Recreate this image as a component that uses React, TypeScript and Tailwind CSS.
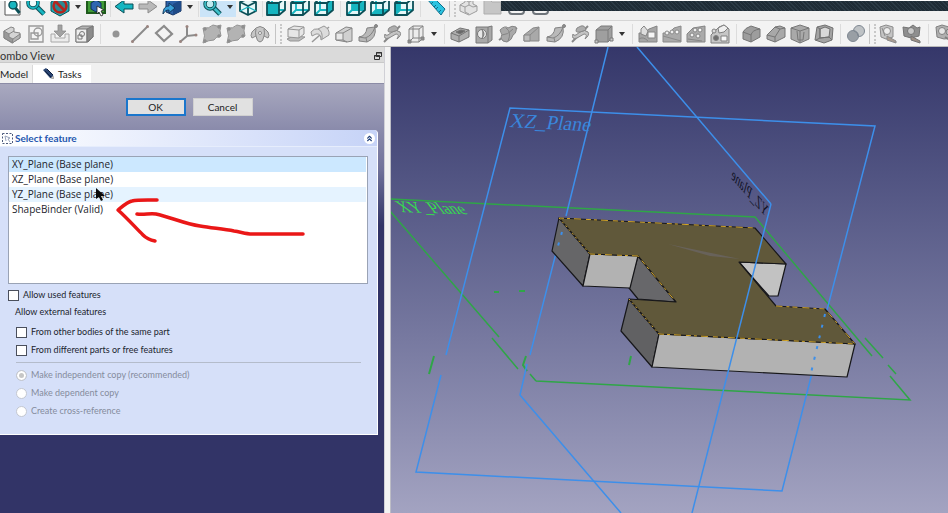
import { useState, type ReactNode } from "react";
import { ChevronsUp } from "lucide-react";
import clsx from "clsx";

const teal = "#16b5c0";
const tealDark = "#0b4f57";
const grey = "#b4b4b4";
const greyDark = "#858585";
const greyLight = "#d4d4d4";

/* Standard view cube: the face that is looked at is filled. */
function ViewCube({ face }: { face?: "front" | "top" | "right" | "rear" | "bottom" | "left" }) {
  const faces = {
    front: "M1 6h12v12H1z",
    top: "M1 6l5-5h13l-6 5z",
    right: "M13 6l6-5v12l-6 5z",
    rear: "M6 1h13v12H6z",
    bottom: "M1 18l5-5h13l-6 5z",
    left: "M1 6l5-5v12l-5 5z",
  };
  return (
    <g strokeLinejoin="round" fill="none">
      <path d="M1 6l5-5h13v12l-6 5H1z" fill="#e6f7f8" />
      <path d="M6 1v12h13M6 13l-5 5" stroke={teal} strokeWidth="1.800" />
      {face && <path d={faces[face]} fill={teal} />}
      <path d="M1 6l5-5h13v12l-6 5H1zM1 6h12v12M13 6l6-5" stroke={tealDark} strokeWidth="1.800" />
    </g>
  );
}

const icons: Record<string, ReactNode> = {
  fitAll: (
    <>
      <path d="M3 1h15v17H3z" fill="#fff" stroke="#555" />
      <circle cx="11" cy="8" r="4" fill={teal} stroke={tealDark} strokeWidth="1.500" />
      <path d="M13.500 11l4 5" stroke={tealDark} strokeWidth="3" />
    </>
  ),
  fitSelection: (
    <>
      <path d="M10 9l8 8" stroke={tealDark} strokeWidth="5" />
      <path d="M10 9l8 8" stroke={teal} strokeWidth="3" />
      <circle cx="7" cy="6" r="5" fill="#eefafa" stroke={tealDark} strokeWidth="3.600" />
      <circle cx="7" cy="6" r="5" fill="none" stroke={teal} strokeWidth="2" />
    </>
  ),
  drawStyle: (
    <>
      <path d="M1 5l9-5 9 5v9l-9 5-9-5z" fill={teal} stroke={tealDark} />
      <circle cx="10" cy="9" r="6.500" fill="#2c8a92" stroke="#b3261e" strokeWidth="2.600" />
      <path d="M6 5l8 8" stroke="#b3261e" strokeWidth="2.600" />
    </>
  ),
  boxSelect: (
    <>
      <path d="M1 3h18v13H1z" fill="#3f9b35" stroke="#1f5a1c" strokeWidth="2" />
      <path d="M5 6l5-3 5 3v6l-5 3-5-3z" fill="#2f67b0" stroke="#122f5c" />
      <path d="M11 9l7 4-3 1 2 4-2 1-2-4-2 2z" fill="#fff" stroke="#222" strokeWidth=".8" />
    </>
  ),
  back: <path d="M10 3v4h9v5h-9v4L1 9.500z" fill={teal} stroke={tealDark} />,
  forward: <path d="M10 3v4H1v5h9v4l9-6.500z" fill="#b9b9b9" stroke="#8d8d8d" />,
  linkGo: (
    <>
      <path d="M4 4l8-3 7 2v11l-8 4-7-3z" fill="#2e62a8" stroke="#16325e" />
      <path d="M11 7l8-4v11l-8 4z" fill="#1f4b88" />
      <path d="M1 17c0-6 3-8 6-8V6l6 5-6 5v-3c-3 0-4 1-6 4z" fill="#3aa0d8" stroke="#123a5f" />
    </>
  ),
  zoom: (
    <>
      <path d="M10 9l8 8" stroke={tealDark} strokeWidth="5" />
      <path d="M10 9l8 8" stroke="#3fc0ca" strokeWidth="2.600" />
      <circle cx="8" cy="7" r="5" fill="#bfeaf0" stroke={tealDark} strokeWidth="3.400" />
      <circle cx="8" cy="7" r="5" fill="none" stroke="#3fc0ca" strokeWidth="1.600" />
    </>
  ),
  iso: (
    <g fill="#e6f7f8" stroke={tealDark} strokeWidth="1.800" strokeLinejoin="round">
      <path d="M2 5l8-3 8 3v9l-8 4-8-4z" />
      <path d="M2 5l8 4 8-4M10 9v9" fill="none" />
      <path d="M2 14l8-4 8 4" fill="none" stroke={teal} strokeWidth="1.200" />
    </g>
  ),
  front: <ViewCube face="front" />,
  top: <ViewCube face="top" />,
  right: <ViewCube face="right" />,
  rear: <ViewCube face="rear" />,
  bottom: <ViewCube face="bottom" />,
  left: <ViewCube face="left" />,
  ruler: (
    <>
      <path d="M1 2l5-3 13 13-4 6z" fill="#2cc3e0" stroke="#0c6f8c" />
      <path d="M5 7l2-2M8 10l2-2M10 12l2-2M13 15l2-2" stroke="#0c6f8c" />
    </>
  ),
  part: (
    <g fill="#e2e2e2" stroke="#9d9d9d">
      <path d="M2 8l5-3V2l4-2 4 2v5l4 2v5l-8 4-9-4z" />
      <path d="M2 8l5 2 4-2V5l4-2M7 10v5l4 2M11 8l4 2 4-1M11 5L7 3" fill="none" />
    </g>
  ),
  folder: <path d="M2 3h6l2 2h9v12H2z" fill="#c6c6c6" stroke="#adadad" />,
  hidden: <path d="M3 0v14q0 3 3 3h9q3 0 3-3V0" fill="#f4f4f4" stroke="#6e747a" strokeWidth="2" />,

  body: (
    <g stroke={greyDark} strokeLinejoin="round">
      <path d="M2 7l7-4 3 1v4l6 1v5l-8 5-8-5z" fill={greyLight} />
      <path d="M2 7l5 3v3l4 2v4l-9-5z" fill="#999" />
      <path d="M11 15l7-5v4l-8 5z" fill={grey} />
      <path d="M7 10l5-3" fill="none" />
    </g>
  ),
  sketch: (
    <g fill="none" stroke="#9a9a9a" strokeWidth="1.400">
      <path d="M3 2h14v16H3z" fill="#f4f4f4" />
      <circle cx="12" cy="8" r="4" />
      <path d="M5 9h7v6H5z" />
    </g>
  ),
  editSketch: (
    <>
      <path d="M1 10h4v4h10v-4h4v8H1z" fill="#ececec" stroke="#a8a8a8" />
      <path d="M8 1h4v6h4l-6 6-6-6h4z" fill="#a2a2a2" stroke="#8a8a8a" strokeWidth=".8" />
    </>
  ),
  mapSketch: (
    <g stroke="#777" strokeLinejoin="round">
      <path d="M2 5l6-3h11v11l-5 5H2z" fill={grey} />
      <path d="M2 5h11v13H2z" fill="#eee" />
      <path d="M13 5l6-3v11l-6 5z" fill="#8b8b8b" />
      <circle cx="8" cy="10" r="2.500" fill="none" />
      <path d="M4 11h4v4H4z" fill="none" />
    </g>
  ),
  point: <circle cx="10" cy="10" r="3.500" fill="#959595" />,
  line: (
    <>
      <path d="M2 18L18 2" stroke="#8b8b8b" strokeWidth="2" />
      <circle cx="2.500" cy="17.500" r="1.500" fill="#9b8580" />
      <circle cx="17.500" cy="2.500" r="1.500" fill="#9b8580" />
    </>
  ),
  plane: <path d="M10 2l8 8-8 7-8-8z" fill="#f3f3f3" stroke="#8b8b8b" strokeWidth="2.200" />,
  axes: (
    <>
      <path d="M9 2v10l9-1M9 12l-7 6" fill="none" stroke="#8b8b8b" strokeWidth="2" />
      <circle cx="9" cy="2.500" r="1.500" fill="#9b8580" />
      <circle cx="18" cy="11" r="1.500" fill="#9b8580" />
      <circle cx="2.500" cy="17.500" r="1.500" fill="#9b8580" />
    </>
  ),
  shapeBinder: (
    <g stroke="#929292">
      <path d="M1 4q6 1 10-3 4 2 8 0-2 6 0 11-6 1-7 4-5 0-11 3 3-7 0-15z" fill="#b3b3b3" />
      <circle cx="3" cy="5" r="1.300" fill="#8b8b8b" />
      <circle cx="17" cy="3" r="1.300" fill="#8b8b8b" />
      <circle cx="3" cy="17" r="1.300" fill="#8b8b8b" />
      <circle cx="17" cy="12" r="1.300" fill="#8b8b8b" />
    </g>
  ),
  clone: (
    <g stroke="#888">
      <path d="M6 4q4-3 8 0l4 4q2 4 0 6l-4-2q-1 6-4 6t-4-6l-4 2q-2-2 0-6z" fill="#c6c6c6" />
      <path d="M6 5q-1 4 0 7M14 5q1 4 0 7" fill="none" />
      <circle cx="10" cy="9" r="1.500" fill="#fff" />
    </g>
  ),
  pad: (
    <g stroke="#949494" strokeLinejoin="round">
      <path d="M1 15l7-3 11 1-6 4H4z" fill="#bcbcbc" />
      <path d="M2 5l6-3 10 1v7l-5 4-11-1z" fill="#e6e6e6" />
      <path d="M2 5l11 1 5-3M13 6v8" fill="none" />
    </g>
  ),
  revolution: (
    <g stroke="#979797">
      <path d="M2 18L19 3" strokeWidth="1.500" />
      <path d="M1 8q3-4 7-3l6-3q6 3 5 9l-8 5q0-7-5-6l-4 2z" fill="#dcdcdc" />
      <path d="M8 5q5 2 4 10" fill="none" />
    </g>
  ),
  loft: (
    <g stroke="#858585" strokeLinejoin="round">
      <path d="M2 9l10-6 6 1v13l-5 1-11-2z" fill="#d0d0d0" />
      <path d="M2 9h7v7H2z" fill="#e8e8e8" />
      <path d="M9 9l9-5M9 16l4 2" fill="none" />
    </g>
  ),
  pipe: (
    <g stroke="#828282">
      <path d="M1 13q7-1 8-9l8-1q2 11-8 15l-8-1z" fill="#b9b9b9" />
      <path d="M1 13l6 1q7-2 10-11M8 14l1 4" fill="none" />
      <circle cx="18" cy="2" r="1.500" fill="#909090" />
    </g>
  ),
  helix: (
    <g stroke="#888">
      <path d="M2 18L18 2" strokeWidth="2" />
      <path d="M3 10q-2 6 4 4l7-4q4 0 1 5 5-4 3-7-3-3-8 0l-4 3q-3 1-3-1z" fill="#c4c4c4" />
      <path d="M7 4q-3 5 3 4l6-2q-1-5-5-4z" fill="#adadad" />
    </g>
  ),
  box: (
    <g stroke="#828282" strokeLinejoin="round">
      <path d="M3 5l4-3h10v12l-4 4H3z" fill="#ebebeb" />
      <path d="M3 5h10v13M13 5l4-3M7 2v12h10M7 14l-4 4" fill="none" />
      <path d="M2 16h3v3H2zM15 13h3v3h-3z" fill="#8c8c8c" />
    </g>
  ),
  pocket: (
    <g stroke="#747474" strokeLinejoin="round">
      <path d="M1 9l9-5 9 2v7l-10 5-8-3z" fill="#aeaeae" />
      <path d="M1 9l8 3 10-6M9 12v6" fill="none" />
      <path d="M6 8l5-2 4 1-5 3z" fill="#686868" />
    </g>
  ),
  hole: (
    <g stroke="#787878">
      <path d="M2 3h12l4-1v14l-4 3H2z" fill="#a8a8a8" />
      <path d="M14 3v16" />
      <circle cx="8" cy="10" r="4.500" fill="#e8e8e8" />
      <path d="M8 6q4 4 0 8" fill="#999" />
    </g>
  ),
  groove: (
    <g stroke="#858585">
      <path d="M1 16L19 4" strokeWidth="2" />
      <path d="M2 6q5-5 8-2 4-3 8-1 1 6-3 8-1 5-6 7-5 0-6-4 2-3-1-8z" fill="#a9a9a9" />
      <path d="M8 4q6 4 2 13M4 11q6 0 11-6" fill="none" />
    </g>
  ),
  subLoft: (
    <g stroke="#888" strokeLinejoin="round">
      <path d="M2 11l9-7 6-1v14H2z" fill="#a9a9a9" />
      <path d="M2 11h6v6H2z" fill="#bdbdbd" />
      <path d="M8 11l9-8" fill="none" />
    </g>
  ),
  subBox: (
    <g stroke="#7b7b7b" strokeLinejoin="round">
      <path d="M2 6l5-4h11v12l-4 4H2z" fill="#9f9f9f" />
      <path d="M2 6h12v12M14 6l4-4" fill="none" />
      <path d="M1 16h3v3H1zM16 14h3v3h-3z" fill="#c9c9c9" />
    </g>
  ),
  mirrored: (
    <g stroke="#858585">
      <path d="M1 9h5l5-4 8-3v16H1z" fill="#a5a5a5" />
      <path d="M3 5l3-3 4 5-2 5-5-2z" fill="#dedede" />
      <path d="M10 8h7v6h-7z" fill="#f5f5f5" />
      <path d="M1 15q4-3 9 2" fill="none" />
    </g>
  ),
  linearPattern: (
    <g stroke="#8a8a8a">
      <path d="M1 9h6l5-5 7-2v16H1z" fill="#aaa" />
      <circle cx="5" cy="9" r="2" fill="#efefef" />
      <circle cx="10" cy="8" r="2" fill="#efefef" />
      <circle cx="15" cy="8" r="2" fill="#f8f8f8" />
      <path d="M1 12l18 5" />
    </g>
  ),
  polarPattern: (
    <g stroke="#858585">
      <path d="M1 10l6-6 12-2v16H1z" fill="#aaa" />
      <circle cx="9" cy="6" r="2" fill="#efefef" />
      <circle cx="14" cy="6" r="2" fill="#f8f8f8" />
      <circle cx="6" cy="11" r="2" fill="#efefef" />
      <circle cx="12" cy="12" r="2" fill="#efefef" />
      <path d="M2 15l14 2" />
    </g>
  ),
  multiTransform: (
    <g stroke="#808080">
      <path d="M1 11l8-8 5-2 5 4v14H1z" fill="#c6c6c6" />
      <path d="M8 4l6-3 4 3-4 4-5 1z" fill="#efefef" />
      <circle cx="4" cy="7" r="2" fill="#dcdcdc" />
      <circle cx="6" cy="14" r="2.500" fill="#6f6f6f" />
      <path d="M11 12h6v5h-6z" fill="#f8f8f8" />
    </g>
  ),
  fillet: (
    <g stroke="#757575" strokeLinejoin="round">
      <path d="M1 8q2-4 8-6l9 3v8l-9 5-8-3z" fill="#9d9d9d" />
      <path d="M1 8l8 3q1-5 9-6M9 11v7" fill="none" />
    </g>
  ),
  chamfer: (
    <g stroke="#757575" strokeLinejoin="round">
      <path d="M1 11l8-8 5-1 5 2v9l-10 5-8-3z" fill="#a8a8a8" />
      <path d="M1 11l8 2 5-8 5-1M9 13v5M9 3l5 2" fill="none" />
    </g>
  ),
  draft: (
    <g stroke="#777" strokeLinejoin="round">
      <path d="M1 4l9-3 9 3v11l-9 4-9-4z" fill="#a9a9a9" />
      <path d="M1 4l9 3 9-3M10 7v12M7 7l1 9h5l1-8" fill="none" />
    </g>
  ),
  thickness: (
    <g stroke="#707070" strokeLinejoin="round">
      <path d="M1 16L3 3l8-2 8 3-1 12-8 3z" fill="#a3a3a3" />
      <path d="M6 5l5-2 5 2-1 8-9 1z" fill="#d9d9d9" />
      <path d="M3 3l3 2v9l-4 2M6 14l9-1 3 3" fill="none" />
    </g>
  ),
  boolean: (
    <g stroke="#7e8791">
      <circle cx="13" cy="7" r="5.500" fill="#bec2c5" />
      <circle cx="7" cy="12" r="5.500" fill="#999fa5" />
      <path d="M8 7q4 1 4 5" fill="none" />
    </g>
  ),
  measure: (
    <g stroke="#8c8c8c">
      <path d="M2 3l6-2 7 2v10l-7 2-5-2z" fill="#c4c4c4" />
      <circle cx="9" cy="7" r="3.500" fill="#ededed" />
      <path d="M9 12l9 5v2l-9-3z" fill="#a99c91" />
      <path d="M4 4l3 8" fill="none" />
    </g>
  ),
  measureAngular: (
    <g stroke="#747474">
      <path d="M1 3l6 1 4-3 4 3 3-1-1 9-8 2-7-2z" fill="#8f8f8f" />
      <circle cx="9" cy="7" r="3.500" fill="#c8c8c8" />
      <path d="M9 12l9 5v2l-9-3z" fill="#9c8f85" />
    </g>
  ),
  measureRefresh: (
    <g stroke="#808080">
      <path d="M2 3l6-2 7 2 4-1v12l-9 1-7-2z" fill="#b0b0b0" />
      <circle cx="8" cy="7" r="3.500" fill="#e5e5e5" />
      <circle cx="15" cy="8" r="3" fill="#bdbdbd" />
      <path d="M11 13l8 5" strokeWidth="2" />
    </g>
  ),
};

function Icon({ name }: { name: string }) {
  return (
    <button type="button" aria-label={name} className="flex h-5 w-6 shrink-0 items-center justify-center">
      <svg viewBox="0 0 20 20" className="size-5" fill="none" aria-hidden="true">
        {icons[name]}
      </svg>
    </button>
  );
}

function Drop() {
  return (
    <button type="button" aria-label="more" className="flex h-5 w-3 shrink-0 items-center justify-center">
      <svg viewBox="0 0 6 4" className="h-1 w-1.5" aria-hidden="true">
        <path d="M0 0h6L3 4z" fill="#333" />
      </svg>
    </button>
  );
}

function Sep({ narrow }: { narrow?: boolean }) {
  return (
    <span className={clsx("flex h-5 shrink-0 justify-center", narrow ? "w-1" : "w-2")}>
      <span className="w-px bg-[#dcdcdc]" />
    </span>
  );
}

function Grip({ wide }: { wide?: boolean }) {
  return (
    <span className={clsx("flex h-5 shrink-0 justify-center gap-1", wide ? "w-3" : "w-2")}>
      <span className="w-px bg-[#c4c4c4]" />
      <span className="border-l-2 border-dotted border-[#c8c8c8]" />
    </span>
  );
}

function Toolbar({ items }: { items: string[] }) {
  return items.map((item, i) => {
    if (item === "v") return <Drop key={i} />;
    if (item === "|") return <Sep key={i} />;
    if (item === ",") return <Sep key={i} narrow />;
    if (item === ":") return <Grip key={i} />;
    if (item === "::") return <Grip key={i} wide />;
    return <Icon key={i} name={item} />;
  });
}

const partDesign = [
  "body", "sketch", "editSketch", "mapSketch", "|",
  "point", "line", "plane", "axes", "shapeBinder", "shapeBinder", "clone", "::",
  "pad", "revolution", "loft", "pipe", "helix", "box", "v", "|",
  "pocket", "hole", "groove", "subLoft", "pipe", "helix", "subBox", "v", "|",
  "mirrored", "linearPattern", "polarPattern", "multiTransform", "|",
  "fillet", "chamfer", "draft", "thickness", "|",
  "boolean", ":", "measure", "measureAngular", "|", "measureRefresh",
];

const features = ["XY_Plane (Base plane)", "XZ_Plane (Base plane)", "YZ_Plane (Base plane)", "ShapeBinder (Valid)"];

function Check({ label }: { label: string }) {
  return (
    <label className="flex h-[18px] items-center gap-1 text-[#1b1f2e]">
      <input type="checkbox" className="size-[11px] appearance-none border border-[#4a4f5c] bg-white checked:bg-[#1a6fc4]" />
      {label}
    </label>
  );
}

function FeatureList() {
  const [selected, setSelected] = useState(0);
  return (
    <div className="relative">
      <ul role="listbox" aria-label="Features" className="h-32 border border-[#9aa3b5] bg-white font-['Open_Sans','Noto_Sans',sans-serif] text-[10px] leading-[15px] text-[#23242c]">
        {features.map((feature, i) => (
          <li
            key={feature}
            role="option"
            aria-selected={i === selected}
            onClick={() => setSelected(i)}
            className={clsx("mr-px pl-[3px]", i === selected ? "bg-[#cce8ff]" : i === 2 && "bg-[#e5f3ff]")}
          >
            {feature}
          </li>
        ))}
      </ul>
      <svg viewBox="8 155 300 100" className="pointer-events-none absolute top-0 left-0 h-[100px] w-[300px]" fill="none" aria-hidden="true">
        <path d="M96 187v11l3-2 2 4 2-1-2-4h4z" fill="#0a0a0a" />
        <g stroke="#ea1717" strokeWidth="3.500" strokeLinecap="round" strokeLinejoin="round">
          <path d="M157 199c-10 0-19-.5-25 1-5 1-9 5-14 9 8 7 17 17 25 25 4 4 7 5 12 6" />
          <path d="M137 213c7 1 13-1 19 0 14 3 29 10 44 12 12 2 23 3 34 5 7 1 12 3 18 3h51" />
        </g>
      </svg>
    </div>
  );
}

function TaskPanel() {
  return (
    <div className="flex-1 border-t border-[#8c8ca6] bg-linear-to-b from-[#a9a9bf] via-[#70719a] via-20% to-[#323467] to-33% pr-1.5">
      <div className="flex justify-center gap-[7px] py-3.5 text-[10px] leading-none text-[#1c1c1c]">
        <button type="button" className="h-[18px] w-[60px] border-2 border-[#1a76cc] bg-[#e1e1e1]">OK</button>
        <button type="button" className="h-[18px] w-[60px] border border-[#d0d0d0] bg-[#e1e1e1]">Cancel</button>
      </div>
      <section className="rounded-tr-sm border-r border-b border-white bg-[#d6e0f9] text-[9px]">
        <header className="flex h-[17px] items-center gap-0.5 rounded-tr-sm border-b border-[#e6edfc] bg-linear-to-r from-white to-[#c6d3f7] px-0.5">
          <svg viewBox="0 0 11 11" className="size-[11px]" fill="none" stroke="#4d5a7d" aria-hidden="true">
            <path d="M.5.5h10v10H.5z" strokeDasharray="2 1.500" />
            <path d="M3 3l5 2-2 1 2 3M3 3l1 5" stroke="#9aa5bd" />
          </svg>
          <h2 className="text-[10px] font-bold text-[#2456ae]">Select feature</h2>
          <button type="button" aria-label="Collapse" className="ml-auto flex size-[11px] items-center justify-center rounded-full bg-white text-[#1f3f7a]">
            <ChevronsUp size={9} strokeWidth={3} />
          </button>
        </header>
        <div className="px-2 pt-[9px] pb-3.5">
          <div className="mr-px">
            <FeatureList />
          </div>
          <div className="pt-0.5">
            <Check label="Allow used features" />
          </div>
          <fieldset className="px-2 text-[#1b1f2e]">
            <legend className="-ml-px h-[19px] leading-4">Allow external features</legend>
            <Check label="From other bodies of the same part" />
            <Check label="From different parts or free features" />
            <hr className="my-[3px] border-[#b4bccb]" />
            {["Make independent copy (recommended)", "Make dependent copy", "Create cross-reference"].map((label, i) => (
              <label key={label} className="flex h-[18px] items-center gap-1 text-[#858c9d]">
                <input
                  type="radio"
                  name="copy"
                  disabled
                  defaultChecked={i === 0}
                  className="size-[11px] appearance-none rounded-full border border-[#c3c7d0] bg-white checked:bg-[#c6c6c6] checked:shadow-[inset_0_0_0_2px_white]"
                />
                {label}
              </label>
            ))}
          </fieldset>
        </div>
      </section>
    </div>
  );
}

function ComboView() {
  return (
    <aside className="flex w-[384px] shrink-0 flex-col">
      <div className="mb-0.5 flex h-4 items-center justify-between border-b border-[#c9c9c9] bg-[#dadada] pt-0.5 pr-0.5">
        <h1 className="text-[11px] leading-none text-[#333]">ombo View</h1>
        <button type="button" aria-label="Float panel">
          <svg viewBox="0 0 8 8" className="size-2" fill="none" stroke="#333" aria-hidden="true">
            <path d="M2.500.5h5v4h-5zM.5 3.500h5v4h-5z" fill="#dadada" />
            <path d="M2 1h6M0 4h6" />
          </svg>
        </button>
      </div>
      <div role="tablist" className="flex h-[18px] text-[10px] text-[#222]">
        <button type="button" role="tab" className="w-[33px] border-r border-[#d9d9d9] text-left">Model</button>
        <button type="button" role="tab" aria-selected="true" className="flex w-[58px] items-center gap-[3px] bg-white pl-2.5">
          <svg viewBox="0 0 12 12" className="size-3" aria-hidden="true">
            <path d="M0 2l3-2 7 7 1 4-4-1z" fill="#2b4572" />
            <path d="M2 3l6 6M4 1l6 6" stroke="#0f1f3e" />
            <path d="M8 10l3 1-1-3z" fill="#d9cdb8" />
          </svg>
          Tasks
        </button>
      </div>
      <TaskPanel />
    </aside>
  );
}

function Viewport() {
  return (
    <main className="relative flex-1 overflow-hidden bg-linear-to-b from-[#35376a] to-[#a3a3c1]">
      <svg viewBox="391 47 557 466" preserveAspectRatio="xMinYMin slice" className="absolute inset-0 size-full" fill="none" role="img" aria-label="3D view">
        <g stroke="#2fa647" strokeWidth="1.500">
          <path d="M390 199l365 18 117 139M390 211l109 126M492 338l26 31M530 374l6 7M865 338l18 20M888 365l8 9M890 376l20 24-374-19" />
          <path d="M434 356l-5 18M526 356l-3 9 4 6M631 356l-2 9M494 292h5M519 291h6" strokeWidth="2" />
        </g>
        <g stroke="#3d8fea" strokeWidth="1.500">
          <path d="M446 355l64-247 365 18-48 184M812 373l-30 118-366-19 25-97" />
          <path d="M608 47l-42 169M556 253l-26 102M527 364l-7 31 101 118M637 47l134 157" />
        </g>
        <g stroke="#17171a" strokeWidth="1.200" strokeLinejoin="round">
          <path d="M739 262l47 2-8 32h-9z" fill="#c2c2c2" />
          <path d="M638 256l38 46-38-3-9-11z" fill="#67676a" />
          <path d="M559 218l31 36-7 32-31-35z" fill="#666668" />
          <path d="M590 254l48 2-8 32-47-2z" fill="#b2b2b2" />
          <path d="M629 299l30 35-7 33-31-36z" fill="#616163" />
          <path d="M659 334l196 10-8 33-195-10z" fill="#b2b2b2" />
          <path d="M559 218l196 10 31 36-47-2 37 44 49 3 30 35-196-10-30-35 47 3-38-46-48-2z" fill="#60583a" />
        </g>
        <path d="M668 244l72 15-30-3z" fill="#68625a" />
        <g stroke="#d6a829" strokeDasharray="5 3 3 4 7 5">
          <path d="M559 218l196 10M590 254l48 2 38 46M659 334l196 10-30-35-49-3" />
          <path d="M559 218l31 36M629 299l30 35" strokeDasharray="2 3" />
        </g>
        <path d="M771 204l-79 309" stroke="#3d8fea" strokeWidth="1.500" />
        <path d="M825 314l-14 59M562 232l-4 14" stroke="#3d8fea" strokeWidth="2" strokeDasharray="3 8" />
        <g fontFamily="'Liberation Serif', serif">
          <text transform="translate(509 127) rotate(3) skewX(-10)" fontSize="20" fill="#3a86dc">XZ_Plane</text>
          <text transform="translate(402 212) rotate(2) skewX(40)" fontSize="16" fill="#35e04c">XY_Plane</text>
          <text transform="translate(766 217) scale(-1 1) rotate(-48) skewX(-32)" fontSize="13" fill="#111326">YZ_Plane</text>
        </g>
      </svg>
    </main>
  );
}

export default function App() {
  return (
    <div className="flex min-h-screen flex-col overflow-hidden bg-[#f0f0f0] font-['Lato','Noto_Sans',sans-serif]">
      <div className="relative flex h-5 items-end overflow-hidden border-t border-white pb-[3px]">
        <Toolbar items={["fitAll", "fitSelection", "drawStyle", "v", "boxSelect", ",", "back", "forward", "linkGo", "v", ","]} />
        <span className="flex h-5 bg-[#cbe4f8]">
          <Toolbar items={["zoom", "v"]} />
        </span>
        <Toolbar items={["iso", ",", "front", "top", "right", "|", "rear", "bottom", "left", "|", "ruler", ":", "part", "folder", "hidden", "hidden"]} />
        <div className="absolute top-0 right-0 left-[501px] h-2.5 bg-[#22303b] bg-[repeating-linear-gradient(45deg,#2b3a45_0px_1px,#1f2c36_1px_3px)]" />
      </div>
      <div className="flex h-[27px] items-center overflow-hidden border-t border-b border-t-[#d5d5d5] border-b-[#b9b9b9] bg-[#f3f3f3]">
        <Toolbar items={partDesign} />
      </div>
      <div className="flex flex-1">
        <ComboView />
        <div className="w-[7px] shrink-0 border-r border-l border-r-[#bdbdc6] border-l-[#d0d0d6] bg-[#f3f3f3]" />
        <Viewport />
      </div>
    </div>
  );
}
